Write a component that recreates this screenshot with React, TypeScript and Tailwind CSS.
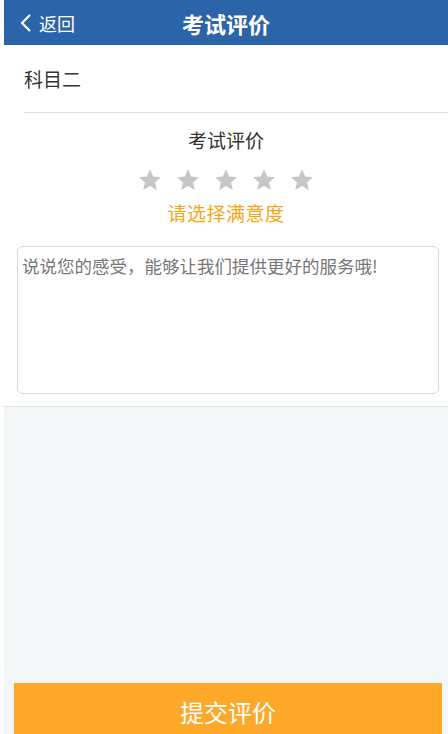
import React from 'react';

const font = { fontFamily: '"Noto Sans CJK SC", "Noto Sans", sans-serif' };

function Star() {
  return (
    <svg width="22" height="21" viewBox="1 0.5 22 21" className="fill-[#c6c6c6]">
      <path d="M12 0.8l3.2 7.1 7.7 0.8-5.8 5.2 1.7 7.6L12 17.6l-6.8 3.9 1.7-7.6L1.1 8.7l7.7-0.8z" />
    </svg>
  );
}

export default function App() {
  return (
    <div className="w-[448px] h-[734px] bg-white flex" style={font}>
      <div className="ml-[4px] flex-1 flex flex-col bg-[#f3f7f8]">
        <header className="h-[45px] bg-[#2c64a9] flex items-center relative text-white">
          <div className="flex items-center pl-[15px] gap-[6px]">
            <svg width="14" height="20" viewBox="0 0 14 20" fill="none" stroke="white" strokeWidth="2.2">
              <path d="M11 2L3 10l8 8" />
            </svg>
            <span className="text-[18px] leading-none">返回</span>
          </div>
          <h1 className="absolute left-0 right-0 text-center text-[22px] font-bold leading-none pointer-events-none">考试评价</h1>
        </header>

        <div className="bg-white border-b border-[#e3e3e3]">
          <div className="ml-[20px] h-[68px] pt-[2px] border-b border-[#dcdcdc] flex items-center text-[19px] text-[#333]">科目二</div>
          <div className="flex flex-col items-center pt-[15px]">
            <div className="text-[19px] leading-[24px] text-[#333]">考试评价</div>
            <div className="flex gap-[16px] mt-[17px]">
              <Star />
              <Star />
              <Star />
              <Star />
              <Star />
            </div>
            <div className="text-[19px] leading-[26px] mt-[10px] text-[#f5a613] tracking-[0.5px]">请选择满意度</div>
          </div>
          <div className="pl-[13px] pr-[9px] pt-[20px] pb-[12px]">
            <textarea
              className="w-full h-[148px] block resize-none rounded-[6px] border border-[#d9d9d9] px-[4px] pt-[8px] pb-[6px] text-[17.5px] leading-[22px] placeholder:text-[#777] outline-none"
              placeholder="说说您的感受，能够让我们提供更好的服务哦!"
              style={font}
            />
          </div>
        </div>

        <div className="flex-1" />
        <div className="px-[10px] pr-[6px]">
          <button className="w-full h-[51px] bg-[#fea829] text-white text-[24px] pt-[6px]" style={font}>提交评价</button>
        </div>
      </div>
    </div>
  );
}
